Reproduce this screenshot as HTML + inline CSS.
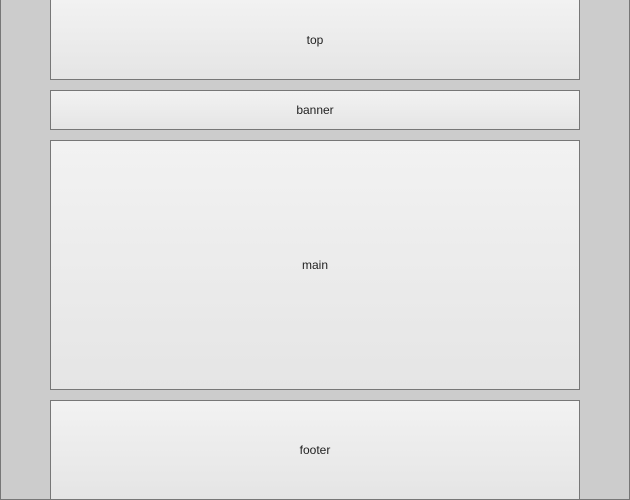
<!DOCTYPE html><html><head><style>
html,body{margin:0;padding:0}
body{width:630px;height:500px;overflow:hidden;position:relative;background:#ccc;font-family:"Liberation Sans",sans-serif;font-size:12px;color:#222}
.o{position:absolute;left:0;top:-1px;width:628px;height:499px;border:1px solid #777;}
.b{position:absolute;left:50px;width:528px;border:1px solid #777;background:linear-gradient(#f2f2f2,#e5e5e5);display:flex;align-items:center;justify-content:center}
</style></head><body>
<div class="o"></div>
<div class="b" style="top:0px;height:78px;border-top:none;padding-top:1px">top</div>
<div class="b" style="top:90px;height:38px">banner</div>
<div class="b" style="top:140px;height:248px">main</div>
<div class="b" style="top:400px;height:98px;border-bottom:none;">footer</div>
</body></html>
